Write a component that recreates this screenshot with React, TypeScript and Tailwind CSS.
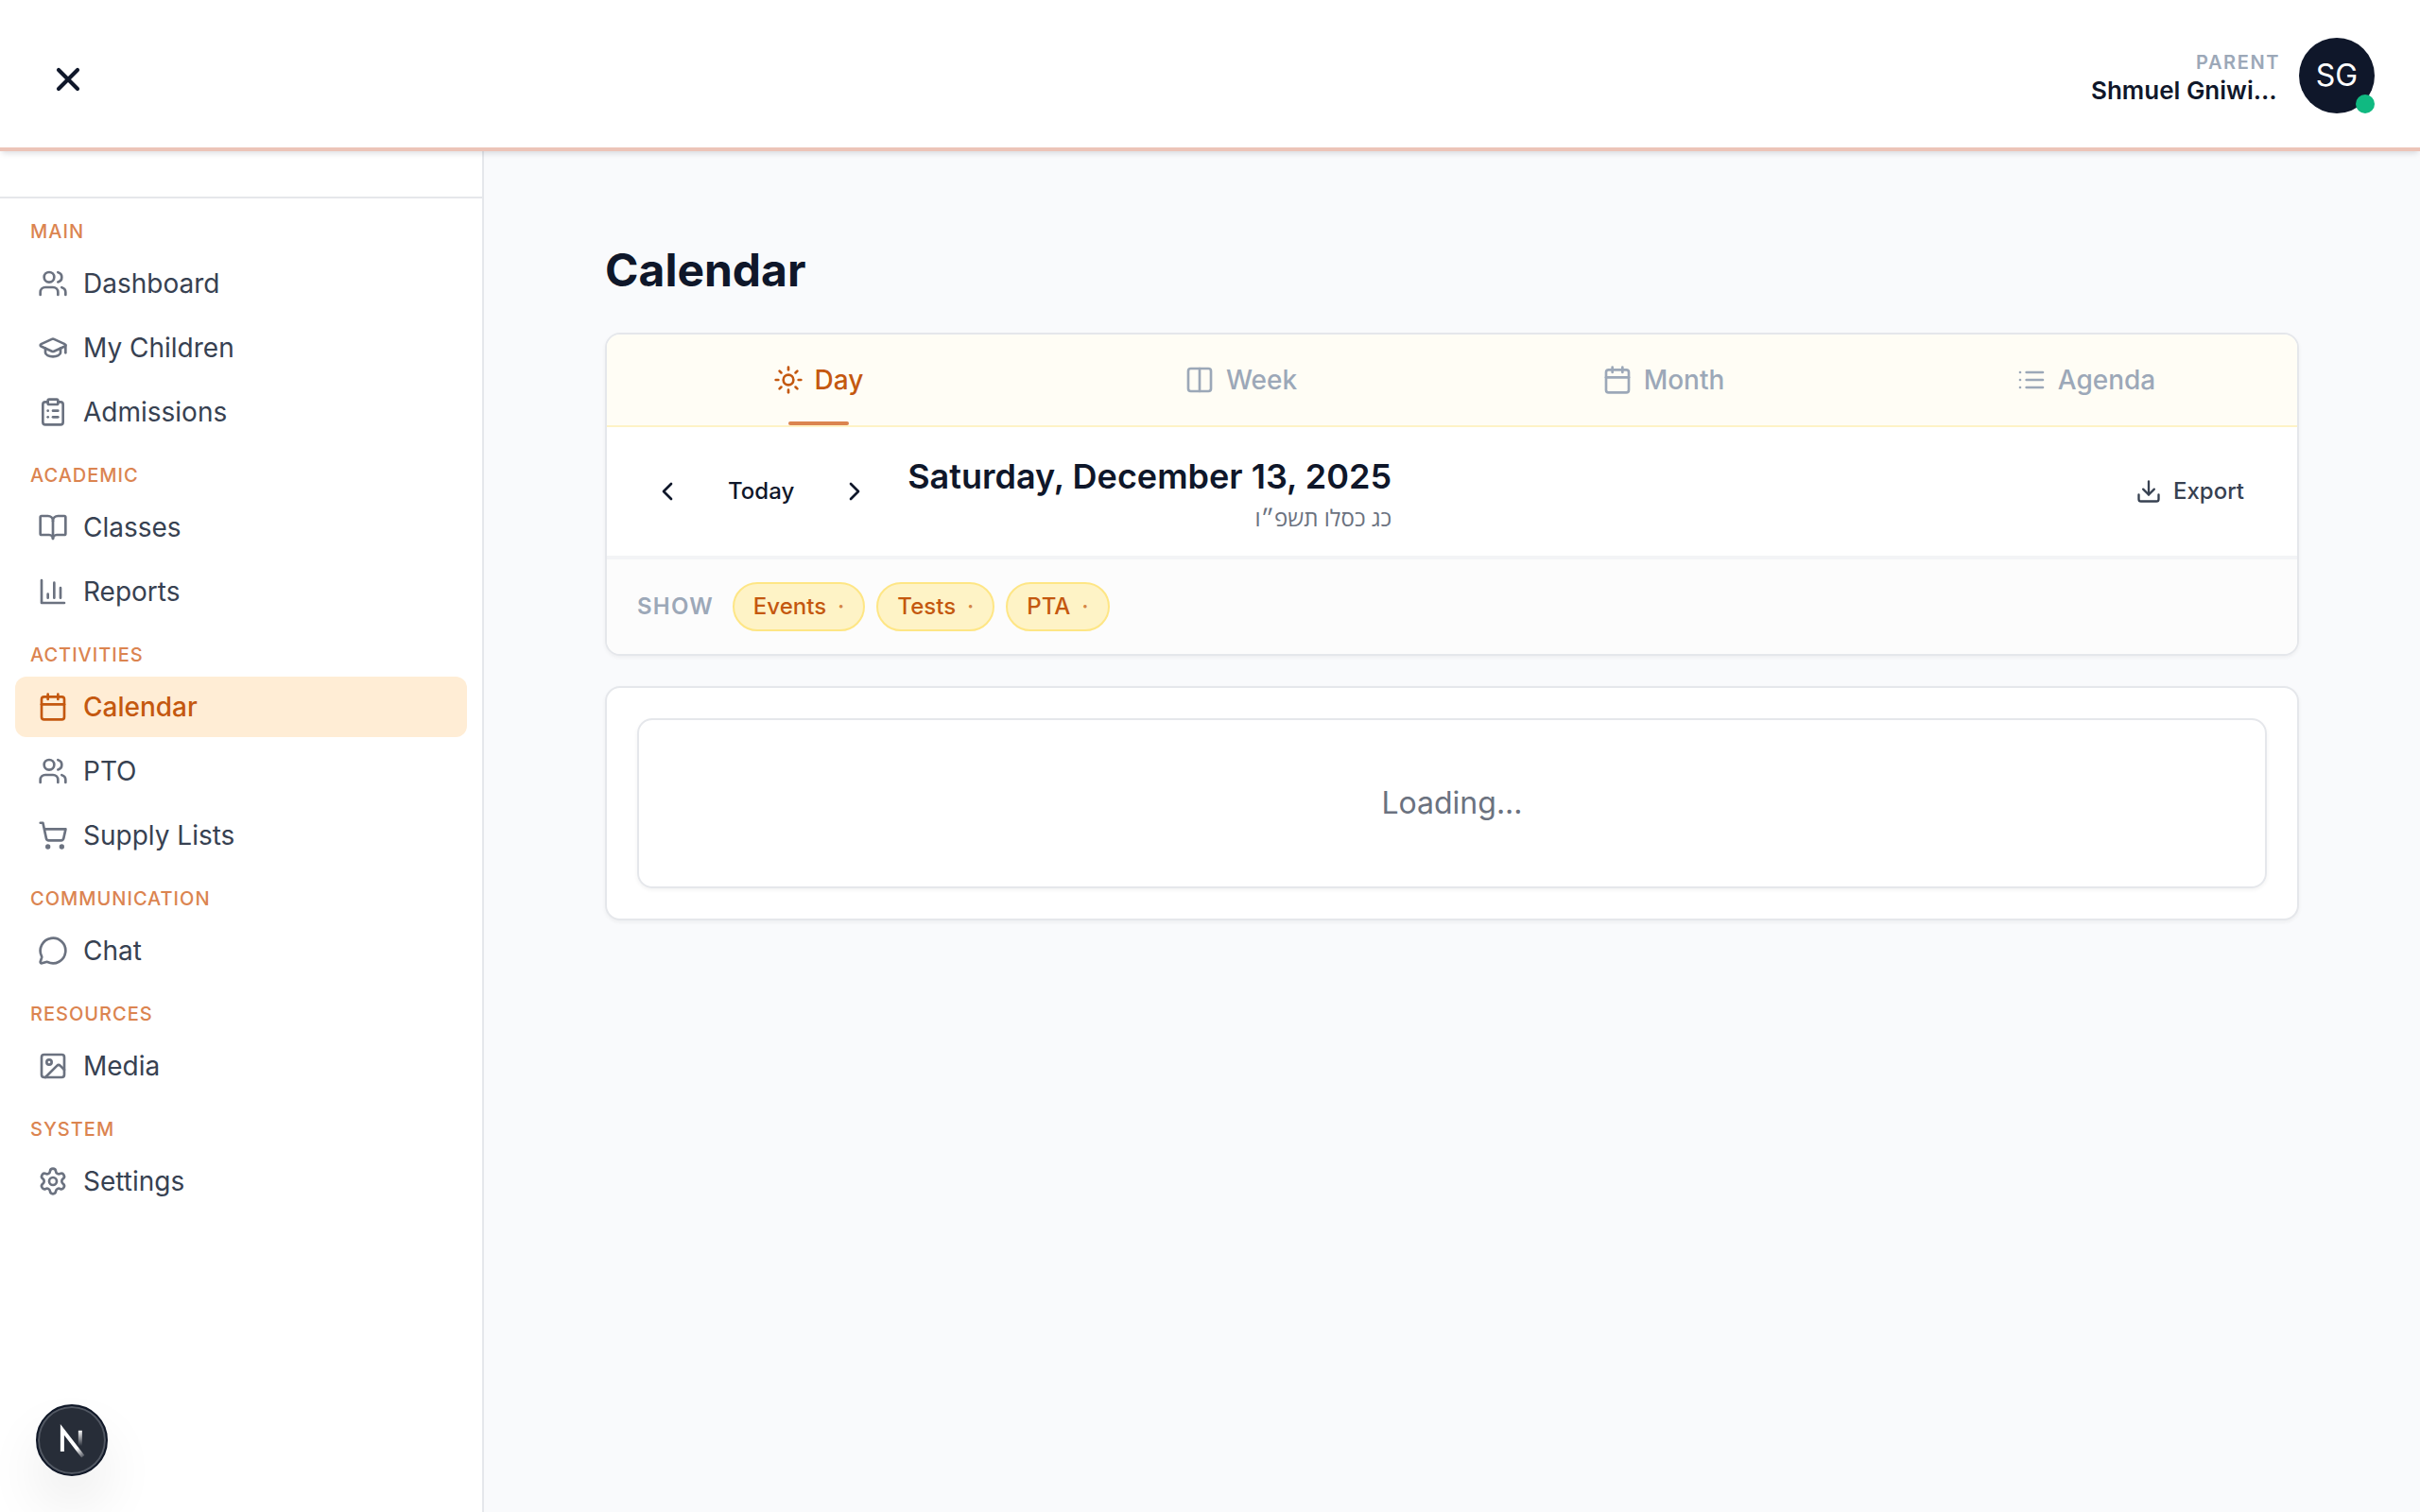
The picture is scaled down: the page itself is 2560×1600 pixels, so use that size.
import { useState } from 'react'
import {
  BookOpen,
  Calendar,
  ChevronLeft,
  ChevronRight,
  ClipboardList,
  Columns2,
  Download,
  GraduationCap,
  MessageCircle,
  Settings,
  ShoppingCart,
  Sun,
  Users,
  X,
} from 'lucide-react'

type IconProps = { className?: string }

function ListIcon({ className }: IconProps) {
  return (
    <svg className={className} viewBox="0 0 24 24" fill="none" stroke="currentColor" strokeWidth="2" strokeLinecap="round" strokeLinejoin="round">
      <path d="M8 6h13M8 12h13M8 18h13M3 6h.01M3 12h.01M3 18h.01" />
    </svg>
  )
}

function ReportsIcon({ className }: IconProps) {
  return (
    <svg className={className} viewBox="0 0 24 24" fill="none" stroke="currentColor" strokeWidth="2" strokeLinecap="round" strokeLinejoin="round">
      <path d="M3 3v18h18M18 17V9M13 17V5M8 17v-3" />
    </svg>
  )
}

function MediaIcon({ className }: IconProps) {
  return (
    <svg className={className} viewBox="0 0 24 24" fill="none" stroke="currentColor" strokeWidth="2" strokeLinecap="round" strokeLinejoin="round">
      <rect x="3" y="3" width="18" height="18" rx="2" />
      <circle cx="9" cy="9" r="2" />
      <path d="m21 15-3.086-3.086a2 2 0 0 0-2.828 0L6 21" />
    </svg>
  )
}

const sections = [
  {
    label: 'Main',
    items: [
      { name: 'Dashboard', icon: Users },
      { name: 'My Children', icon: GraduationCap },
      { name: 'Admissions', icon: ClipboardList },
    ],
  },
  {
    label: 'Academic',
    items: [
      { name: 'Classes', icon: BookOpen },
      { name: 'Reports', icon: ReportsIcon },
    ],
  },
  {
    label: 'Activities',
    items: [
      { name: 'Calendar', icon: Calendar },
      { name: 'PTO', icon: Users },
      { name: 'Supply Lists', icon: ShoppingCart },
    ],
  },
  { label: 'Communication', items: [{ name: 'Chat', icon: MessageCircle }] },
  { label: 'Resources', items: [{ name: 'Media', icon: MediaIcon }] },
  { label: 'System', items: [{ name: 'Settings', icon: Settings }] },
]

const views = [
  { name: 'Day', icon: Sun },
  { name: 'Week', icon: Columns2 },
  { name: 'Month', icon: Calendar },
  { name: 'Agenda', icon: ListIcon },
]

const filters = ['Events', 'Tests', 'PTA']

function Header() {
  return (
    <header className="relative z-10 flex h-40 items-center justify-between border-b-4 border-[#ecc4b8] bg-white pt-1 pr-12 pl-10 shadow-[0_4px_6px_-2px_rgb(15_23_42/0.15)]">
      <button aria-label="Close menu" className="mt-2 flex h-16 w-16 items-center justify-center text-[#0f172a]">
        <X className="h-10 w-10" strokeWidth={2.5} />
      </button>
      <div className="flex items-center gap-5">
        <div className="w-[200px] pt-1">
          <p className="text-right text-[20px] leading-7 font-semibold tracking-[0.08em] text-[#9ca8b8] uppercase">Parent</p>
          <p className="text-[26px] leading-8 font-semibold whitespace-nowrap text-[#0f172a]">Shmuel Gniwi…</p>
        </div>
        <div className="relative flex h-20 w-20 items-center justify-center rounded-full bg-[#0f172a] text-[32px] text-white">
          SG
          <span className="absolute right-0 bottom-0 h-5 w-5 rounded-full bg-[#10b981]" />
        </div>
      </div>
    </header>
  )
}

function Sidebar() {
  return (
    <aside className="w-[512px] shrink-0 border-r-2 border-gray-200 bg-white">
      <div className="h-[50px] border-b-2 border-gray-200" />
      <nav className="px-4">
        {sections.map((section) => (
          <div key={section.label}>
            <h3 className="px-4 pt-5 pb-2 text-[20px] leading-[30px] font-medium tracking-wider text-[#db8450] uppercase">
              {section.label}
            </h3>
            <ul className="flex flex-col gap-1">
              {section.items.map(({ name, icon: Icon }) => {
                const active = name === 'Calendar'
                return (
                  <li key={name}>
                    <a
                      href="#"
                      className={`flex h-16 items-center gap-4 rounded-xl px-6 text-[28px] ${
                        active ? 'bg-[#ffedd5] font-medium text-[#c4580f]' : 'text-[#374151]'
                      }`}
                    >
                      <Icon className={`h-8 w-8 ${active ? 'text-[#c4580f]' : 'text-[#6b7280]'}`} />
                      {name}
                    </a>
                  </li>
                )
              })}
            </ul>
          </div>
        ))}
      </nav>
    </aside>
  )
}

function DevBadge() {
  return (
    <button
      aria-label="Open dev tools"
      className="fixed bottom-[38px] left-[38px] z-20 h-[76px] w-[76px] rounded-full border-2 border-[#101828] bg-[#272d38] shadow-[0_32px_64px_-8px_rgb(0_0_0/0.12)] ring-2 ring-[#525863] ring-inset"
    >
      <svg viewBox="1 1 36 36" fill="none" className="h-full w-full">
        <defs>
          <linearGradient id="diag" x1="9.955" y1="11.1226" x2="14.2" y2="16.4" gradientUnits="userSpaceOnUse">
            <stop stopColor="white" />
            <stop offset="1" stopColor="white" stopOpacity="0" />
          </linearGradient>
          <linearGradient id="stem" x1="11.8222" y1="1.4" x2="11.791" y2="9.62542" gradientUnits="userSpaceOnUse">
            <stop stopColor="white" />
            <stop offset="1" stopColor="white" stopOpacity="0" />
          </linearGradient>
        </defs>
        <g transform="translate(11.6 12.4)" strokeWidth="2">
          <path d="M13.3 15.2L2.34 1V12.6" stroke="url(#diag)" />
          <path d="M11.825 1.5V13.1" stroke="url(#stem)" />
        </g>
      </svg>
    </button>
  )
}

export default function App() {
  const [view, setView] = useState('Day')

  return (
    <div className="flex min-h-screen flex-col bg-[#f9fafc] font-['Inter',sans-serif]">
      <Header />
      <div className="flex flex-1">
        <Sidebar />
        <main className="flex-1 px-32 pt-24">
          <h1 className="mb-9 text-[48px] leading-[60px] font-bold text-[#0f172a]">Calendar</h1>

          <section className="overflow-hidden rounded-2xl border-2 border-gray-200 bg-white shadow-[0_2px_4px_rgb(0_0_0/0.05)]">
            <div className="grid grid-cols-4 border-b-2 border-amber-100 bg-[#fffdf5]">
              {views.map(({ name, icon: Icon }) => (
                <button
                  key={name}
                  onClick={() => setView(name)}
                  className={`relative flex h-24 items-center justify-center gap-3 text-[28px] font-medium ${
                    view === name ? 'text-[#c4580f]' : 'text-[#9ca8b8]'
                  }`}
                >
                  <Icon className="h-8 w-8" />
                  {name}
                  {view === name && (
                    <span className="absolute bottom-0 left-1/2 h-1 w-16 -translate-x-1/2 rounded-full bg-[#db8450]" />
                  )}
                </button>
              ))}
            </div>

            <div className="flex h-[138px] items-center justify-between border-b-2 border-gray-100 px-8">
              <div className="flex items-center gap-6 text-[#0f172a]">
                <div className="flex items-center gap-2">
                  <button aria-label="Previous day" className="flex h-16 w-16 items-center justify-center">
                    <ChevronLeft className="h-8 w-8" />
                  </button>
                  <button className="h-16 px-6 text-[24px] font-medium">Today</button>
                  <button aria-label="Next day" className="flex h-16 w-16 items-center justify-center">
                    <ChevronRight className="h-8 w-8" />
                  </button>
                </div>
                <div className="pt-2">
                  <h2 className="text-[36px] leading-[48px] font-semibold">Saturday, December 13, 2025</h2>
                  <p dir="rtl" lang="he" className="font-['Open_Sans',sans-serif] text-[24px] leading-10 text-[#6b7280]">
                    כג כסלו תשפ״ו
                  </p>
                </div>
              </div>
              <button className="flex h-16 items-center gap-3 px-6 text-[24px] font-medium text-[#374151]">
                <Download className="h-7 w-7" />
                Export
              </button>
            </div>

            <div className="flex h-[102px] items-center gap-5 border-t-2 border-gray-100 bg-[#fcfcfc] px-8">
              <span className="text-[24px] font-semibold tracking-wider text-[#9ca8b8] uppercase">Show</span>
              <div className="flex gap-3">
                {filters.map((filter) => (
                  <button
                    key={filter}
                    className="flex h-[52px] items-center gap-3 rounded-full border-2 border-amber-200 bg-amber-100 px-5 text-[24px] font-medium text-[#c4580f]"
                  >
                    {filter}
                    <span className="opacity-70">·</span>
                  </button>
                ))}
              </div>
            </div>
          </section>

          <section className="mt-8 rounded-2xl border-2 border-gray-200 bg-white p-8 shadow-[0_2px_4px_rgb(0_0_0/0.05)]">
            <div className="rounded-2xl border-2 border-gray-200 p-16 text-center text-[32px] leading-[48px] text-[#6b7280] shadow-[0_2px_4px_rgb(0_0_0/0.05)]">
              Loading...
            </div>
          </section>
        </main>
      </div>
      <DevBadge />
    </div>
  )
}
